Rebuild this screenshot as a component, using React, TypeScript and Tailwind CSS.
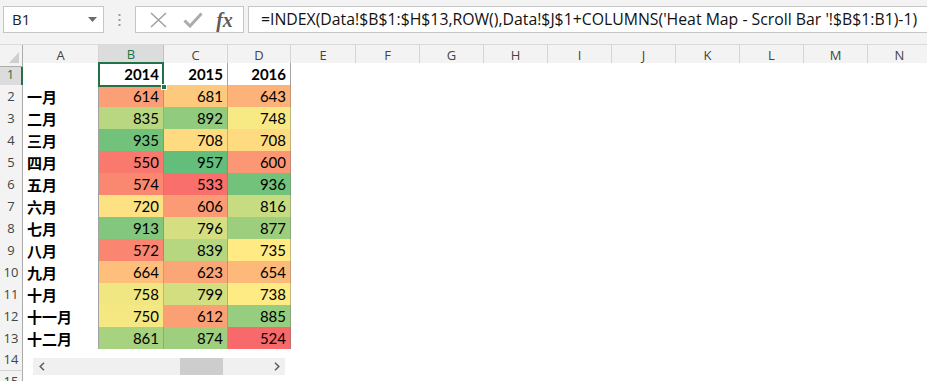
import React from 'react';

type Row = [string, number, number, number];

const data: Row[] = [
  ['一月', 614, 681, 643],
  ['二月', 835, 892, 748],
  ['三月', 935, 708, 708],
  ['四月', 550, 957, 600],
  ['五月', 574, 533, 936],
  ['六月', 720, 606, 816],
  ['七月', 913, 796, 877],
  ['八月', 572, 839, 735],
  ['九月', 664, 623, 654],
  ['十月', 758, 799, 738],
  ['十一月', 750, 612, 885],
  ['十二月', 861, 874, 524],
];

const all = data.flatMap((r) => [r[1], r[2], r[3]]).sort((a, b) => a - b);
const MIN = all[0];
const MAX = all[all.length - 1];
const MID = (() => {
  const pos = (all.length - 1) * 0.5;
  const lo = Math.floor(pos);
  const hi = Math.ceil(pos);
  return all[lo] + (all[hi] - all[lo]) * (pos - lo);
})();

const RED = [248, 105, 107];
const YEL = [255, 235, 132];
const GRN = [99, 190, 123];

function mix(a: number[], b: number[], t: number) {
  return a.map((x, i) => Math.round(x + (b[i] - x) * t));
}

function heat(v: number) {
  let c: number[];
  if (v <= MID) c = mix(RED, YEL, (v - MIN) / (MID - MIN));
  else c = mix(YEL, GRN, (v - MID) / (MAX - MID));
  return `rgb(${c[0]},${c[1]},${c[2]})`;
}

const cols = ['A', 'B', 'C', 'D', 'E', 'F', 'G', 'H', 'I', 'J', 'K', 'L', 'M', 'N', 'O'];
const gridCls = 'grid grid-cols-[23px_76px_65px_64px_63px_65px_64px_64px_64px_64px_64px_64px_64px_64px_64px_64px]';

const cellLines = '[border-right:1px_solid_#a2a2a2] [border-bottom:1px_solid_#a2a2a2]';
const heatLines = '[border-right:1px_solid_rgba(120,120,120,0.45)] [border-bottom:1px_solid_rgba(120,120,120,0.45)]';

function RowHeader({ n, selected }: { n: number; selected?: boolean }) {
  return (
    <div
      className={
        selected
          ? 'flex items-center justify-center bg-[#dcdcdc] [border-right:2px_solid_#217346] [border-bottom:1px_solid_#c0c0c0] text-[#217346] text-[13px] font-["Open_Sans",sans-serif]'
          : 'flex items-center justify-center bg-[#f3f3f3] [border-right:1px_solid_#ababab] [border-bottom:1px_solid_#d4d4d4] text-[#444] text-[13px] font-["Open_Sans",sans-serif]'
      }
    >
      {n}
    </div>
  );
}

function EmptyCells({ count }: { count: number }) {
  return (
    <>
      {Array.from({ length: count }).map((_, i) => (
        <div key={i} className="bg-white" />
      ))}
    </>
  );
}

export default function App() {
  return (
    <div className="relative w-[927px] h-[381px] overflow-hidden bg-white select-none">
      {/* Formula bar */}
      <div className="h-[44px] bg-[#f3f3f3] flex items-start pt-[6px]">
        <div className="ml-[3px] w-[101px] h-[27px] bg-white border border-solid border-[#c6c6c6] flex items-center justify-between pl-[8px] pr-[6px]">
          <span className="text-[15px] text-[#222] font-['Open_Sans',sans-serif] leading-none">B1</span>
          <svg width="9" height="5" viewBox="0 0 9 5">
            <path d="M0 0 L9 0 L4.5 5 Z" fill="#6b6b6b" />
          </svg>
        </div>
        <div className="w-[31px] h-[27px] flex items-center justify-center">
          <svg width="3" height="12" viewBox="0 0 3 12">
            <rect x="0.5" y="0" width="2" height="2" fill="#9a9a9a" />
            <rect x="0.5" y="5" width="2" height="2" fill="#9a9a9a" />
            <rect x="0.5" y="10" width="2" height="2" fill="#9a9a9a" />
          </svg>
        </div>
        <div className="w-[109px] h-[27px] bg-white border border-solid border-[#c6c6c6] flex items-center">
          <div className="w-[40px] flex justify-center pl-[4px]">
            <svg width="17" height="16" viewBox="0 0 17 16">
              <path d="M1 1 L16 15 M16 1 L1 15" stroke="#a3a3a3" strokeWidth="1.6" fill="none" />
            </svg>
          </div>
          <div className="w-[34px] flex justify-center">
            <svg width="20" height="16" viewBox="0 0 20 16">
              <path d="M1.5 8.5 L7 14 L18.5 1.5" stroke="#ababab" strokeWidth="3" fill="none" />
            </svg>
          </div>
          <div className="flex-1 flex justify-center pr-[4px]">
            <span className="font-['Liberation_Serif',serif] italic font-bold text-[20px] text-[#5c5c5c] leading-none">
              fx
            </span>
          </div>
        </div>
        <div className="ml-[4px] flex-1 h-[27px] bg-white border border-solid border-[#c6c6c6] border-r-0 flex items-center pl-[12px] whitespace-nowrap overflow-hidden">
          <span className="text-[15.8px] text-[#111] font-['Open_Sans',sans-serif] leading-none">
            =INDEX(Data!$B$1:$H$13,ROW(),Data!$J$1+COLUMNS('Heat Map - Scroll Bar '!$B$1:B1)-1)
          </span>
        </div>
      </div>

      {/* Column headers */}
      <div className={`${gridCls} h-[19px] [border-top:1px_solid_#dadada]`}>
        <div className="relative bg-[#f3f3f3] [border-right:1px_solid_#ababab] [border-bottom:1px_solid_#ababab]">
          <svg className="absolute right-[3px] bottom-[3px]" width="10" height="11" viewBox="0 0 10 11">
            <path d="M10 0 L10 11 L0 11 Z" fill="#cfcfcf" />
          </svg>
        </div>
        {cols.map((c) =>
          c === 'B' ? (
            <div
              key={c}
              className="flex items-center justify-center bg-[#dcdcdc] [border-right:1px_solid_#c0c0c0] [border-bottom:2px_solid_#217346] text-[#217346] text-[13px] font-['Open_Sans',sans-serif]"
            >
              {c}
            </div>
          ) : (
            <div
              key={c}
              className="flex items-center justify-center bg-[#f3f3f3] [border-right:1px_solid_#d4d4d4] [border-bottom:1px_solid_#ababab] text-[#444] text-[13px] font-['Open_Sans',sans-serif]"
            >
              {c}
            </div>
          )
        )}
      </div>

      {/* Row 1 */}
      <div className={`${gridCls} h-[22px]`}>
        <RowHeader n={1} selected />
        <div className={`bg-white ${cellLines}`} />
        <div className={`relative flex items-center justify-end pr-[4px] bg-white ${cellLines} font-['Lato',sans-serif] font-bold text-[15px] text-black`}>
          2014
          <div className="absolute -left-[1px] -top-[1px] -right-[1px] -bottom-[1px] border-2 border-solid border-[#217346] pointer-events-none" />
          <div className="absolute -right-[4px] -bottom-[4px] w-[6px] h-[6px] bg-[#217346] border border-solid border-white" />
        </div>
        <div className={`flex items-center justify-end pr-[4px] bg-white ${cellLines} font-['Lato',sans-serif] font-bold text-[15px] text-black`}>
          2015
        </div>
        <div className={`flex items-center justify-end pr-[4px] bg-white ${cellLines} font-['Lato',sans-serif] font-bold text-[15px] text-black`}>
          2016
        </div>
        <EmptyCells count={11} />
      </div>

      {/* Data rows */}
      {data.map((r, i) => (
        <div key={i} className={`${gridCls} h-[22px]`}>
          <RowHeader n={i + 2} />
          <div className={`flex items-center pl-[4px] bg-white ${cellLines} font-['Noto_Sans_CJK_SC',sans-serif] font-bold text-[15px] text-black leading-none`}>
            {r[0]}
          </div>
          {[r[1], r[2], r[3]].map((v, j) => (
            <div
              key={j}
              className={`flex items-center justify-end pr-[4px] ${heatLines} font-['Lato',sans-serif] text-[15px] text-black`}
              style={{ backgroundColor: heat(v) }}
            >
              {v}
            </div>
          ))}
          <EmptyCells count={11} />
        </div>
      ))}

      {/* Rows 14, 15 */}
      {[14, 15].map((n) => (
        <div key={n} className={`${gridCls} h-[22px]`}>
          <RowHeader n={n} />
          <EmptyCells count={15} />
        </div>
      ))}

      {/* Scroll bar form control */}
      <div className="absolute left-[33px] top-[358px] w-[252px] h-[17px] bg-[#f0f0f0] flex items-center">
        <div className="w-[17px] h-[17px] flex items-center justify-center">
          <svg width="6" height="9" viewBox="0 0 6 9">
            <path d="M5 0.8 L1.2 4.5 L5 8.2" stroke="#606060" strokeWidth="1.6" fill="none" />
          </svg>
        </div>
        <div className="ml-[130px] w-[43px] h-[17px] bg-[#cdcdcd]" />
        <div className="flex-1" />
        <div className="w-[17px] h-[17px] flex items-center justify-center">
          <svg width="6" height="9" viewBox="0 0 6 9">
            <path d="M1 0.8 L4.8 4.5 L1 8.2" stroke="#606060" strokeWidth="1.6" fill="none" />
          </svg>
        </div>
      </div>
    </div>
  );
}
